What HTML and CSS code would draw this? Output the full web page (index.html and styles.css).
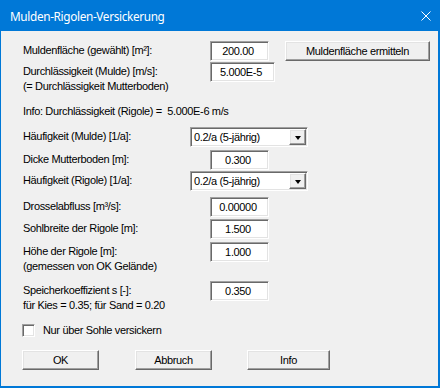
FILE: index.html
```html
<!DOCTYPE html>
<html lang="de">
<head>
<meta charset="UTF-8">
<title>Mulden-Rigolen-Versickerung</title>
<link rel="stylesheet" href="styles.css">
</head>
<body>

<div class="window">
  <div class="titlebar">
    <span class="title">Mulden-Rigolen-Versickerung</span>
    <svg class="close" width="10" height="10" viewBox="0 0 10 10">
      <path d="M0.5 0.5L9.5 9.5M9.5 0.5L0.5 9.5" stroke="#fff" stroke-width="1" fill="none"/>
    </svg>
  </div>

  <form class="content" id="muldenForm">
    <div class="row row-a">
      <label class="label" for="flaeche">Muldenfläche (gewählt) [m²]:</label>
      <input class="edit" type="text" id="flaeche" value="200.00">
      <button type="button" class="btn btn-calc">Muldenfläche ermitteln</button>
    </div>

    <div class="row row-b">
      <label class="label" for="kfMulde">Durchlässigkeit (Mulde) [m/s]:<br>(= Durchlässigkeit Mutterboden)</label>
      <input class="edit edit-wide" type="text" id="kfMulde" value="5.000E-5">
    </div>

    <div class="info">Info: Durchlässigkeit (Rigole) =&nbsp; 5.000E-6 m/s</div>

    <div class="row row-c">
      <label class="label">Häufigkeit (Mulde) [1/a]:</label>
      <div class="combo">
        <span class="combo-text">0.2/a (5-jährig)</span>
        <span class="combo-btn"><span class="arrow"></span></span>
      </div>
    </div>

    <div class="row row-d">
      <label class="label" for="mutterboden">Dicke Mutterboden [m]:</label>
      <input class="edit" type="text" id="mutterboden" value="0.300">
    </div>

    <div class="row row-e">
      <label class="label">Häufigkeit (Rigole) [1/a]:</label>
      <div class="combo">
        <span class="combo-text">0.2/a (5-jährig)</span>
        <span class="combo-btn"><span class="arrow"></span></span>
      </div>
    </div>

    <div class="row row-f">
      <label class="label" for="drossel">Drosselabfluss [m³/s]:</label>
      <input class="edit" type="text" id="drossel" value="0.00000">
    </div>

    <div class="row row-g">
      <label class="label" for="sohlbreite">Sohlbreite der Rigole [m]:</label>
      <input class="edit" type="text" id="sohlbreite" value="1.500">
    </div>

    <div class="row row-h">
      <label class="label" for="hoehe">Höhe der Rigole [m]:<br>(gemessen von OK Gelände)</label>
      <input class="edit" type="text" id="hoehe" value="1.000">
    </div>

    <div class="row row-i">
      <label class="label" for="speicher">Speicherkoeffizient s [-]:<br>für Kies = 0.35; für Sand = 0.20</label>
      <input class="edit" type="text" id="speicher" value="0.350">
    </div>

    <div class="row row-j">
      <span class="check"></span>
      <span class="check-label">Nur über Sohle versickern</span>
    </div>

    <div class="row buttons">
      <button type="submit" class="btn btn-ok">OK</button>
      <button type="button" class="btn btn-cancel">Abbruch</button>
      <button type="button" class="btn btn-info">Info</button>
    </div>
  </form>
</div>

</body>
</html>
```

FILE: styles.css
```css
* {
  box-sizing: border-box;
}
body {
  margin: 0;
  background: #fff;
  font-family: "Liberation Sans", Arial, sans-serif;
  font-size: 11px;
  letter-spacing: -0.35px;
  color: #000;
}
.window {
  width: 440px;
  height: 388px;
  border: 1px solid #0078d7;
  border-top: 0;
  border-right-width: 2px;
  border-bottom-width: 2px;
  background: #f0f0f0;
  display: flex;
  flex-direction: column;
}
.titlebar {
  height: 31px;
  flex: none;
  background: #0078d7;
  display: flex;
  align-items: center;
  padding-left: 9px;
  padding-right: 7px;
}
.title {
  font-family: "Noto Sans", "Open Sans", sans-serif;
  font-size: 11.8px;
  letter-spacing: -0.35px;
  color: #fff;
}
.close {
  margin-left: auto;
  display: block;
}
.content {
  padding: 10px 0 0 22px;
  margin: 0;
}
.row {
  display: flex;
  align-items: flex-start;
}
.label {
  width: 167px;
  flex: none;
  padding-top: 2px;
  line-height: 15px;
}
.info {
  margin-top: 10px;
  line-height: 15px;
}

/* sunken edit fields */
.edit {
  margin: 0 0 0 20px;
  width: 59px;
  height: 20px;
  padding: 0 3px 0 0;
  border: 1px solid;
  border-color: #a0a0a0 #fff #fff #a0a0a0;
  box-shadow: inset 1px 1px #696969, inset -1px -1px #e3e3e3;
  background: #fff;
  font: inherit;
  letter-spacing: inherit;
  text-align: center;
  color: #000;
  outline: none;
}
.edit-wide {
  width: 65px;
}

/* raised buttons */
.btn {
  height: 20px;
  padding: 0;
  border: 1px solid;
  border-color: #fff #696969 #696969 #fff;
  box-shadow: inset -1px -1px #a0a0a0, inset 1px 1px #e3e3e3;
  background: #f0f0f0;
  font: inherit;
  letter-spacing: inherit;
  color: #000;
}
.btn-calc {
  margin-left: 16px;
  width: 145px;
}

/* combo boxes */
.combo {
  width: 118px;
  height: 20px;
  border: 1px solid;
  border-color: #a0a0a0 #fff #fff #a0a0a0;
  box-shadow: inset 1px 1px #696969, inset -1px -1px #e3e3e3;
  background: #fff;
  display: flex;
  padding: 1px;
}
.combo-text {
  flex: 1;
  padding-left: 2px;
  line-height: 16px;
}
.combo-btn {
  width: 17px;
  height: 16px;
  border: 1px solid;
  border-color: #fff #696969 #696969 #fff;
  box-shadow: inset -1px -1px #a0a0a0, inset 1px 1px #e3e3e3;
  background: #f0f0f0;
  display: flex;
  align-items: center;
  justify-content: center;
}
.arrow {
  width: 0;
  height: 0;
  border-left: 3.5px solid transparent;
  border-right: 3.5px solid transparent;
  border-top: 4px solid #000;
  margin-top: 1px;
}

/* vertical placement of the rows */
.row-b { margin-top: 1px; }
.row-c { margin-top: 8px; }
.row-d { margin-top: 3px; }
.row-e { margin-top: 1px; }
.row-f { margin-top: 6px; }
.row-g { margin-top: 2px; }
.row-h { margin-top: 3px; }
.row-i { margin-top: 7px; }

.row-j {
  margin-top: 10px;
  margin-left: -1px;
  align-items: center;
  line-height: 15px;
}
.check {
  width: 13px;
  height: 13px;
  border: 1px solid;
  border-color: #a0a0a0 #fff #fff #a0a0a0;
  box-shadow: inset 1px 1px #696969, inset -1px -1px #e3e3e3;
  background: #fff;
}
.check-label {
  margin-left: 8px;
}

.buttons {
  margin-top: 12px;
  margin-left: -1px;
}
.btn-ok,
.btn-cancel {
  width: 77px;
}
.btn-cancel {
  margin-left: 36px;
}
.btn-info {
  margin-left: 35px;
  width: 83px;
}
```
